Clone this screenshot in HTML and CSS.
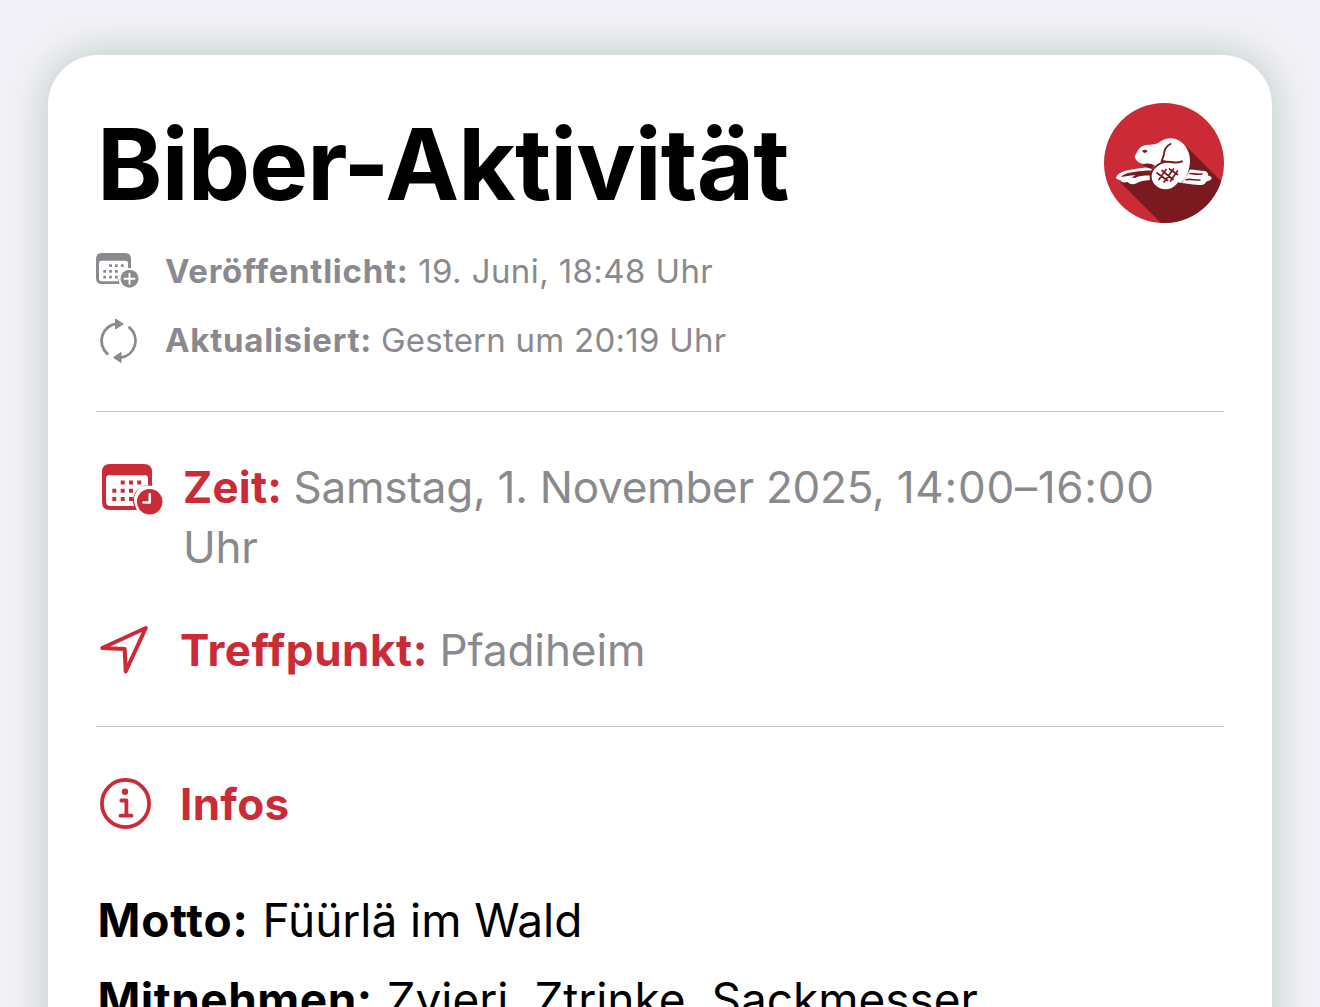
FILE: index.html
```html
<!DOCTYPE html>
<html lang="de">
<head>
<meta charset="utf-8">
<title>Biber-Aktivität</title>
<link rel="stylesheet" href="styles.css">
</head>
<body>
<main class="card">
  <header class="head">
    <h1 class="title">Biber-Aktivität</h1>
    <svg class="logo" viewBox="0 0 120 120">
      <defs><clipPath id="disc"><circle cx="60" cy="60" r="60"/></clipPath></defs>
      <circle cx="60" cy="60" r="60" fill="#cb2b37"/>
      <path clip-path="url(#disc)" fill="#791a20" d="M16 79L57 120H120V81L83 44L50 62Z"/>
      <path fill="#fff" d="M12 74.500C14 70 19 68 25 67C32 65.500 39 64.500 46 64L48.500 66L46 77C40 77.500 36 78 32 80.500C28 82 25 81 24 79C20 80 17 79.500 16.500 77C14 77 12 76 12 74.500Z"/>
      <path fill="#791a20" d="M17 74C20 70.500 24 70 30 69C36 68 41 67.500 47 67.500L46 72.500C39 72.500 34 73 31 75L27.500 74.500L31.500 72.200C26 72 22 73.500 17 74Z"/>
      <path fill="#fff" d="M86 66.500C91 66.500 96 68 101 68C104 69 104 71 104 72.500C107 73 108.500 75 107 76.500C105 78 102 78 101.500 80C99 83 93 82 89 81.500L78 80L83 72Z"/>
      <path fill="none" stroke="#791a20" stroke-width="1.600" stroke-linecap="round" d="M86 70.500C90 70.500 93 72 98 71M82 76.800C87 75.500 91 77.500 96 77"/>
      <path fill="#fff" d="M30.700 53C33 50 34 45 39 42.700C44 41 49 42.500 54 40C60 35.500 66 34 72 36C80 39 86 48 86 57C86 66 83 74 77 80L48 72L51 62C48 63 46 62.500 43 61.500C36 61 31 58 30.700 53Z"/>
      <path fill="#791a20" d="M38 61.500C42 59.800 47 60 51 62.500L47.500 66L43 64.500Z"/>
      <path fill="#791a20" d="M38.500 47.500C40 46 43 46.500 43.500 48.500L41 50L38.500 49Z"/>
      <circle cx="61.500" cy="71.800" r="14.500" fill="#fff"/>
      <path fill="none" stroke="#791a20" stroke-width="1.900" stroke-linecap="round" d="M66.500 41C60 44 60.500 49 59.500 53L57.700 58L61.500 58.500M50 83.500C45.500 78 45.500 70 50 65C55 60 61 58 67 59C72 60 75 59.500 78 58.300"/>
      <path fill="none" stroke="#791a20" stroke-width="1.700" stroke-linecap="round" d="M53 70L63.500 77.500M58 67.500L69 76.500M65.500 66L73.500 71.500M55 76.500L62 66.500M60 79L69.500 66M66.500 78L73.500 68"/>
    </svg>
  </header>

  <section class="meta">
    <div class="meta-row">
      <svg class="meta-icon" viewBox="0 0 44 44">
        <path fill="#8a8a8e" fill-rule="evenodd" d="M6 4H29Q35 4 35 10V20A10.500 10.500 0 0 0 23.500 32.500V35H6Q0 35 0 29V10Q0 4 6 4ZM5.500 11.700Q3 11.700 3 14V29.500Q3 32.200 6 32.200H22.500A11 11 0 0 1 32 20V14Q32 11.700 29.500 11.700Z"/>
        <path fill="#8a8a8e" d="M13.200 15.200h2.700v2.700h-2.700zM19 15.200h2.700v2.700h-2.700zM24.900 15.200h2.700v2.700h-2.700zM7.300 21h2.700v2.700h-2.700zM13.200 21h2.700v2.700h-2.700zM19 21h2.700v2.700h-2.700zM7.300 26.700h2.700v2.700h-2.700zM13.200 26.700h2.700v2.700h-2.700zM19 26.700h2.700v2.700h-2.700z"/>
        <circle cx="33.500" cy="29.700" r="10.600" fill="#fff"/>
        <circle cx="33.500" cy="29.700" r="9" fill="#8a8a8e"/>
        <path d="M33.500 24.700V34.700M28.500 29.700H38.500" stroke="#fff" stroke-width="1.900" stroke-linecap="round"/>
      </svg>
      <p class="meta-text"><b class="m1">Veröffentlicht:</b> <span class="v1">19. Juni, 18:48 Uhr</span></p>
    </div>
    <div class="meta-row">
      <svg class="meta-icon" viewBox="0 0 44 44">
        <path fill="none" stroke="#8a8a8e" stroke-width="2.800" stroke-linecap="round" d="M11.300 35.700A17.200 17.200 0 0 1 21 5.700M33.500 9.600A17.200 17.200 0 0 1 24.500 39.700"/>
        <path fill="#8a8a8e" stroke="#8a8a8e" stroke-width="1" stroke-linejoin="round" d="M19.500 1L27.200 6L19.500 11ZM25 34.500L17.500 39.500L25 44.500Z"/>
      </svg>
      <p class="meta-text"><b class="m2">Aktualisiert:</b> <span class="v2">Gestern um 20:19 Uhr</span></p>
    </div>
  </section>

  <section class="facts">
    <div class="fact">
      <svg class="fact-icon" viewBox="0 0 62 54">
        <path fill="#cb2b37" fill-rule="evenodd" d="M8 2H42Q50 2 50 10V24A14 14 0 0 0 33.500 43.500L35 48H8Q0 48 0 40V10Q0 2 8 2ZM7 13.200Q4 13.200 4 16.200V39.500Q4 44 8.500 44H32A15 15 0 0 1 46 23.500V16.200Q46 13.200 43 13.200Z"/>
        <path fill="#cb2b37" d="M18.700 18.500h4v4h-4zM27 18.500h4v4h-4zM35.200 18.500h4v4h-4zM10.300 26.700h4v4h-4zM18.700 26.700h4v4h-4zM27 26.700h4v4h-4zM10.300 35h4v4h-4zM18.700 35h4v4h-4zM27 35h4v4h-4z"/>
        <circle cx="47.700" cy="39.700" r="15" fill="#fff"/>
        <circle cx="47.700" cy="39.700" r="12.800" fill="#cb2b37"/>
        <path d="M47.800 32.200V40.500H41.500" fill="none" stroke="#fff" stroke-width="2.500" stroke-linecap="round" stroke-linejoin="round"/>
      </svg>
      <p class="fact-text"><b class="k1">Zeit:</b> <span class="t1">Samstag, 1. November 2025, <span class="clock">14:00–16:00</span> Uhr</span></p>
    </div>
    <div class="fact place">
      <svg class="fact-icon" viewBox="0 0 62 54">
        <path fill="none" stroke="#cb2b37" stroke-width="4" stroke-linejoin="round" d="M.2 28L43.800 8L23.700 51.500L22.700 29Z"/>
      </svg>
      <p class="fact-text"><b class="k2">Treffpunkt:</b> <span class="t2">Pfadiheim</span></p>
    </div>
  </section>

  <section class="infos">
    <h2 class="infos-head">
      <svg class="info-icon" viewBox="0 0 52 52">
        <circle cx="25.500" cy="25.500" r="23.600" fill="none" stroke="#cb2b37" stroke-width="3.800"/>
        <circle cx="25" cy="13.700" r="3.200" fill="#cb2b37"/>
        <path d="M21.300 22.500H26.400V37.500M20.500 37.700H31.500" fill="none" stroke="#cb2b37" stroke-width="3.800" stroke-linecap="round" stroke-linejoin="round"/>
      </svg>
      <span class="k3">Infos</span>
    </h2>
    <p class="line"><b class="b1">Motto:</b> <span class="w1">Füürlä im Wald</span></p>
    <p class="line"><b class="b2">Mitnehmen:</b> <span class="w2">Zvieri, Ztrinke, Sackmesser</span></p>
  </section>
</main>
</body>
</html>
```
FILE: styles.css
```css
* { box-sizing: border-box; }
body {
  margin: 0;
  height: 1007px;
  overflow: hidden;
  padding: 55px 48px 0;
  background: #f2f1f7;
  font-family: Inter, "Liberation Sans", sans-serif;
}
h1, h2, p { margin: 0; }
svg { display: block; flex: none; overflow: visible; }
b { font-weight: 700; }
.card {
  height: 1100px;
  padding: 48px;
  background: #fff;
  border-radius: 50px;
  box-shadow: 0 0 40px rgba(63, 116, 80, 0.32);
}
.head { display: flex; justify-content: space-between; height: 120px; }
.title { padding-left: 1px; font-size: 99px; line-height: 122px; font-weight: 700; white-space: nowrap; letter-spacing: -0.85px; }
.logo { width: 120px; height: 120px; }
.meta { padding: 26px 0 49px; border-bottom: 1px solid #c6c6c8; }
.meta-row { display: flex; align-items: center; gap: 25px; height: 44px; }
.meta-row + .meta-row { margin-top: 25px; }
.meta-icon { width: 44px; height: 44px; }
.meta-text { font-size: 33px; line-height: 44px; color: #8a8a8e; white-space: nowrap; letter-spacing: 0.5px; }
.m1, .m2 { letter-spacing: 0.72px; }
.v1 { letter-spacing: 0.4px; }
.v2 { margin-left: -1px; letter-spacing: 0.25px; }
.facts { padding: 45px 0 45px; border-bottom: 1px solid #c6c6c8; }
.fact { display: flex; gap: 19px; padding-left: 6px; }
.fact-icon { width: 62px; height: 54px; margin-top: 5px; }
.fact-text { flex: 1; font-size: 44px; line-height: 60px; color: #8a8a8e; }
.fact b, .infos-head { color: #cb2b37; }
.k1 { letter-spacing: 0.2px; }
.t1 { margin-left: -1px; letter-spacing: -0.23px; }
.clock { letter-spacing: 0.75px; }
.k2 { letter-spacing: 0.55px; }
.t2 { margin-left: -1px; letter-spacing: -0.1px; }
.place { margin-top: 43px; margin-bottom: 1px; gap: 16px; }
.place .fact-icon { margin-top: 0; }
.infos { padding-top: 47px; }
.infos-head { display: flex; align-items: center; gap: 28px; height: 60px; padding-left: 4px; font-size: 44px; font-weight: 700; }
.k3 { letter-spacing: 0.3px; }
.info-icon { width: 52px; height: 52px; }
.line { padding-left: 1.5px; font-size: 46px; line-height: 58px; white-space: nowrap; }
.b1 { letter-spacing: 0.8px; }
.b2 { letter-spacing: 0.5px; }
.w1, .w2 { margin-left: 1px; letter-spacing: -0.05px; }
.infos-head + .line { margin-top: 57px; }
.line + .line { margin-top: 21px; }
```
